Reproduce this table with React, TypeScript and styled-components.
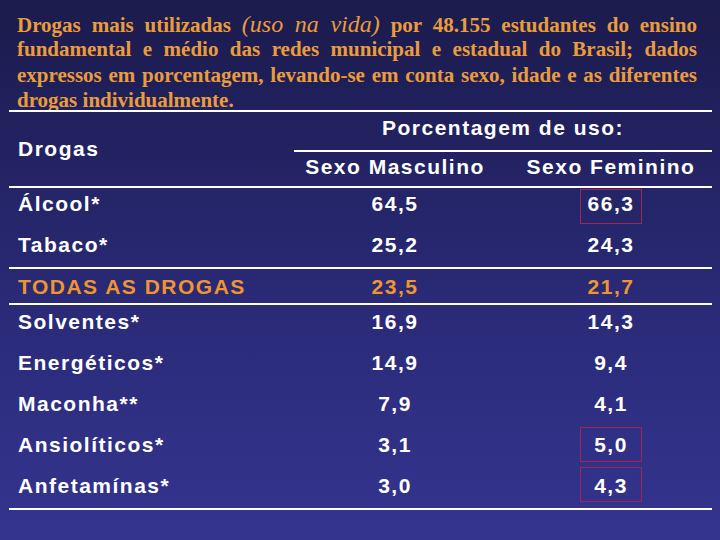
import React from "react";
import styled, { createGlobalStyle, css } from "styled-components";

const GlobalStyle = createGlobalStyle`
  html, body { margin: 0; padding: 0; }
  body { width: 720px; height: 540px; overflow: hidden; background: #1b1b4d; }
`;

const Slide = styled.div`
  width: 720px;
  height: 540px;
  box-sizing: border-box;
  padding-top: 12px;
  display: flex;
  flex-direction: column;
  background: linear-gradient(180deg, #1b1b4c 0%, #232364 30%, #2c2c7d 65%, #34348f 100%);
`;

const Intro = styled.div`
  margin: 0 23px 0 17px;
  font-family: "Liberation Serif", "Times New Roman", serif;
  font-weight: 700;
  font-size: 21px;
  line-height: 25.3px;
  color: #ea9c3c;
`;

const IntroLine = styled.div<{ $last?: boolean }>`
  height: 25.3px;
  text-align: justify;
  text-align-last: ${(p) => (p.$last ? "left" : "justify")};
  white-space: nowrap;
`;

const Aside = styled.span`
  font-style: italic;
  font-weight: 400;
  font-size: 24px;
  line-height: 1;
`;

const Table = styled.div`
  margin: -3px 8px 0 9px;
  border-top: 2px solid #ffffff;
  font-family: "Liberation Sans", Arial, sans-serif;
  font-weight: 700;
  font-size: 21px;
  line-height: 24px;
  letter-spacing: 1.5px;
  color: #ffffff;
`;

const Header = styled.div`
  display: grid;
  grid-template-columns: 285px 1fr;
  border-bottom: 2px solid #ffffff;
`;

const HeaderLabel = styled.div`
  height: 74px;
  padding-left: 9px;
  display: flex;
  align-items: center;
`;

const HeaderRight = styled.div`
  display: flex;
  flex-direction: column;
`;

const GroupTitle = styled.div`
  box-sizing: border-box;
  height: 40px;
  padding-top: 4px;
  text-align: center;
  border-bottom: 2px solid #ffffff;
`;

const SubHeads = styled.div`
  display: grid;
  grid-template-columns: 202px 1fr;
  height: 34px;
  box-sizing: border-box;
  padding-top: 3px;
`;

const Section = styled.div`
  border-bottom: 2px solid #ffffff;
`;

const Row = styled.div<{ $pt: number; $pb: number; $accent?: boolean }>`
  display: grid;
  grid-template-columns: 285px 202px 216px;
  padding: ${(p) => p.$pt}px 0 ${(p) => p.$pb}px;
  color: ${(p) => (p.$accent ? "#ef952f" : "#ffffff")};
`;

const Label = styled.div`
  padding-left: 9px;
`;

const Value = styled.div<{ $fem?: boolean }>`
  text-align: center;
  padding-left: ${(p) => (p.$fem ? 14 : 0)}px;
`;

const Num = styled.span<{ $box?: number }>`
  display: inline-block;
  position: relative;
  ${(p) =>
    p.$box !== undefined &&
    css`
      &::after {
        content: "";
        position: absolute;
        left: 50%;
        top: ${p.$box}px;
        width: 62px;
        height: 35px;
        margin-left: -31px;
        box-sizing: border-box;
        border: 1px solid #a0264f;
      }
    `}
`;

type DataRow = { name: string; m: string; f: string; box?: number };

const first: DataRow[] = [
  { name: "Álcool*", m: "64,5", f: "66,3", box: -3 },
  { name: "Tabaco*", m: "25,2", f: "24,3" },
];

const rest: DataRow[] = [
  { name: "Solventes*", m: "16,9", f: "14,3" },
  { name: "Energéticos*", m: "14,9", f: "9,4" },
  { name: "Maconha**", m: "7,9", f: "4,1" },
  { name: "Ansiolíticos*", m: "3,1", f: "5,0", box: -6 },
  { name: "Anfetamínas*", m: "3,0", f: "4,3", box: -7 },
];

const DrugRow = ({ r, pt, pb, accent }: { r: DataRow; pt: number; pb: number; accent?: boolean }) => (
  <Row $pt={pt} $pb={pb} $accent={accent}>
    <Label>{r.name}</Label>
    <Value>
      <Num>{r.m}</Num>
    </Value>
    <Value $fem>
      <Num $box={r.box}>{r.f}</Num>
    </Value>
  </Row>
);

export default function App() {
  return (
    <>
      <GlobalStyle />
      <Slide>
        <Intro>
          <IntroLine>
            Drogas mais utilizadas <Aside>(uso na vida)</Aside> por 48.155 estudantes do ensino
          </IntroLine>
          <IntroLine>fundamental e médio das redes municipal e estadual do Brasil; dados</IntroLine>
          <IntroLine>expressos em porcentagem, levando-se em conta sexo, idade e as diferentes</IntroLine>
          <IntroLine $last>drogas individualmente.</IntroLine>
        </Intro>
        <Table>
          <Header>
            <HeaderLabel>Drogas</HeaderLabel>
            <HeaderRight>
              <GroupTitle>Porcentagem de uso:</GroupTitle>
              <SubHeads>
                <Value>Sexo Masculino</Value>
                <Value $fem>Sexo Feminino</Value>
              </SubHeads>
            </HeaderRight>
          </Header>
          <Section>
            {first.map((r, i) => (
              <DrugRow key={r.name} r={r} pt={4} pb={i === 0 ? 13 : 10} />
            ))}
          </Section>
          <Section>
            <DrugRow r={{ name: "TODAS AS DROGAS", m: "23,5", f: "21,7" }} pt={6} pb={4} accent />
          </Section>
          <Section>
            {rest.map((r, i) => (
              <DrugRow key={r.name} r={r} pt={5} pb={i === rest.length - 1 ? 10 : 12} />
            ))}
          </Section>
        </Table>
      </Slide>
    </>
  );
}
